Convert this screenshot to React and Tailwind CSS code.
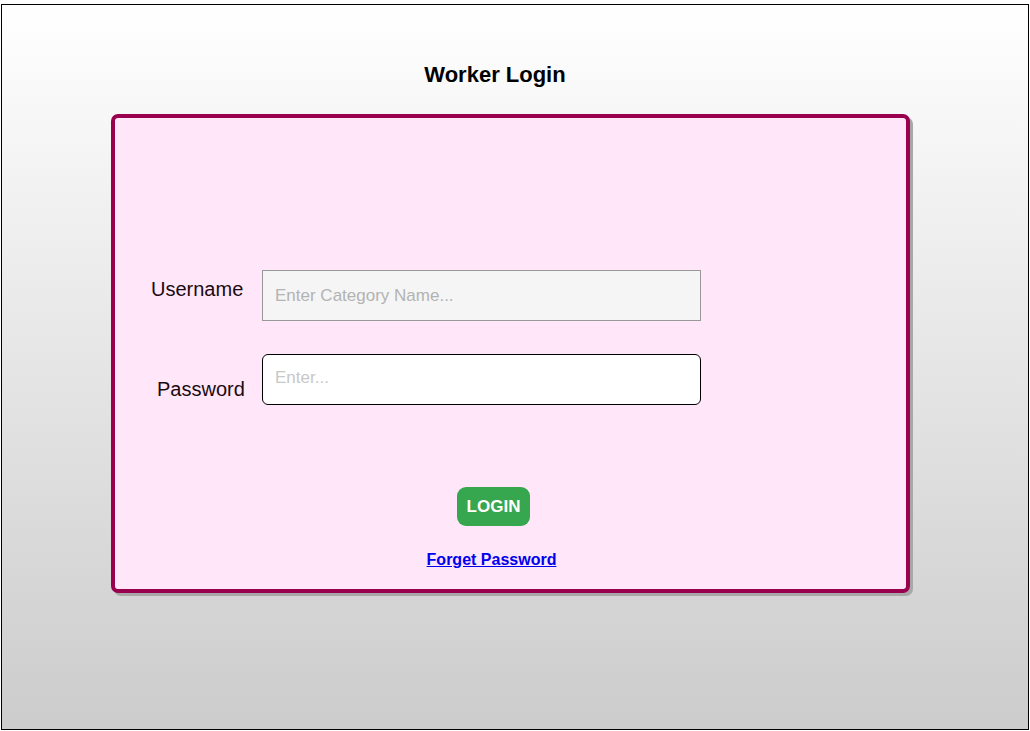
import React from 'react';

const WorkerLogin = () => {
  return (
    <div className="w-[1030px] h-[731px] bg-white pt-[4px] pl-[1px] font-['Liberation_Sans',Arial,sans-serif]">
      <div className="w-[1028px] h-[726px] border border-black bg-gradient-to-b from-white to-[#cccccc] pl-[109px]">
        <div className="w-[799px] pr-[31px] pt-[57px] text-center">
          <h1 className="text-[22px] leading-[26px] font-bold text-black">Worker Login</h1>
        </div>

        <div className="mt-[26px] w-[799px] h-[479px] rounded-[7px] border-[4px] border-[#99004d] bg-[#ffe6f9] shadow-[3px_3px_0_#a8a8a8] flex flex-col">
          <div className="pt-[152px] pl-[36px] flex items-start">
            <label className="w-[111px] mt-[8px] text-[20px] leading-[22px] text-[#1a0a10]">
              Username
            </label>
            <input
              type="text"
              placeholder="Enter Category Name..."
              className="w-[439px] h-[51px] border-[1.5px] border-[#999999] bg-[#f5f5f5] px-[12px] text-[17px] outline-none placeholder:text-[#b3b3b3]"
            />
          </div>

          <div className="mt-[33px] pl-[42px] flex items-start">
            <label className="w-[105px] mt-[24px] text-[20px] leading-[22px] text-[#1a0a10]">
              Password
            </label>
            <input
              type="password"
              placeholder="Enter..."
              className="w-[439px] h-[51px] rounded-[6px] border border-black bg-white px-[12px] pb-[4px] text-[17px] outline-none placeholder:text-[#c8c8c8]"
            />
          </div>

          <div className="mt-[82px] pr-[34px] flex flex-col items-center">
            <button className="w-[73px] h-[39px] rounded-[9px] bg-[#36a64f] text-white text-[17px] font-bold">
              LOGIN
            </button>
            <a href="#" className="mt-[25px] mr-[4px] text-[16px] leading-[18px] font-bold text-[#0000ee] underline">
              Forget Password
            </a>
          </div>
        </div>
      </div>
    </div>
  );
};

export default function App() {
  return <WorkerLogin />;
}
